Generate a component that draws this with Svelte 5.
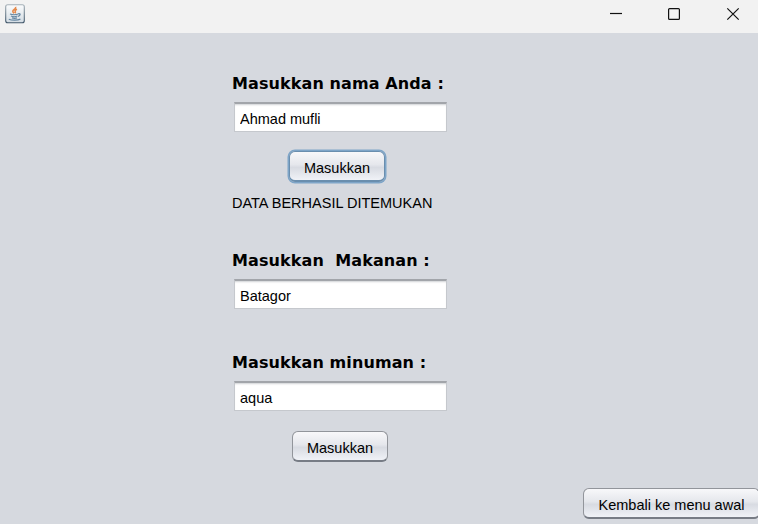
<script>
  let name = $state('Ahmad mufli');
  let food = $state('Batagor');
  let drink = $state('aqua');
</script>

<div class="window">
  <header>
    <svg class="java" width="20" height="20" viewBox="0 0 20 20">
      <defs>
        <linearGradient id="tile" x1="0" y1="0" x2="0" y2="1">
          <stop offset="0" stop-color="#fbfcfd" />
          <stop offset="1" stop-color="#d3dce3" />
        </linearGradient>
        <linearGradient id="edge" x1="0" y1="0" x2="0" y2="1">
          <stop offset="0" stop-color="#a6b1b8" />
          <stop offset="1" stop-color="#41576a" />
        </linearGradient>
      </defs>
      <rect x=".7" y=".7" width="18.6" height="18" rx="2" fill="url(#tile)" stroke="url(#edge)" stroke-width="1.1" />
      <path d="M10.6 2.800c.9 2-2.800 2.700-2.800 4.500 0 .8.700 1.300 1.300 2M12 5.300c-1.500.6-2.300 1.300-1.700 2.300.3.600.1 1.100-.4 1.500" fill="none" stroke="#e5894a" stroke-width="1.600" />
      <path d="M5 10c2 .8 6 .8 8.300 0M6 12c1.700.8 4.700.8 6.400 0M7 13.900c1.500.5 3.700.5 5 0M13.300 9.700c2.600-.3 2.300 1.900-.3 2.600M3.800 15.200c3 1.300 9 1.200 11.600-.1" fill="none" stroke="#6485a0" stroke-width="1.200" />
    </svg>
    <svg class="controls" width="130" height="16" viewBox="0 0 130 16" fill="none" stroke="#111" stroke-width="1.200">
      <path d="M0 7.500h12" />
      <rect x="58.600" y="2.600" width="10.800" height="10.800" rx="1" />
      <path d="M117.300 2.300l11.400 11.400M128.700 2.300l-11.400 11.400" />
    </svg>
  </header>

  <main>
    <section class="person">
      <label for="name">Masukkan nama Anda :</label>
      <input id="name" bind:value={name} spellcheck="false" />
      <button class="focused">Masukkan</button>
      <p>DATA BERHASIL DITEMUKAN</p>
    </section>
    <section class="food">
      <label for="food">Masukkan&nbsp; Makanan :</label>
      <input id="food" bind:value={food} spellcheck="false" />
    </section>
    <section class="drink">
      <label for="drink">Masukkan minuman :</label>
      <input id="drink" bind:value={drink} spellcheck="false" />
      <button>Masukkan</button>
    </section>
  </main>

  <footer><button class="back">Kembali ke menu awal</button></footer>
</div>

<style>
  :global(body) { margin: 0; overflow: hidden; }
  .window {
    box-sizing: border-box;
    width: 758px;
    height: 524px;
    display: flex;
    flex-direction: column;
    overflow: hidden;
    background: #d6d9df;
    color: #000;
    font: 14.5px/20px "Liberation Sans", Arial, sans-serif;
  }
  header {
    box-sizing: border-box;
    height: 33px;
    flex: none;
    display: flex;
    justify-content: space-between;
    align-items: flex-start;
    padding: 4px 18px 0 5px;
    background: #f2f2f2;
  }
  .controls { margin-top: 2px; }
  main {
    flex: 1;
    display: flex;
    flex-direction: column;
    padding: 41px 0 0 232px;
  }
  section {
    width: 216px;
    flex: none;
    display: flex;
    flex-direction: column;
    align-items: flex-start;
  }
  .person { height: 177px; }
  .food { height: 102px; }
  label {
    height: 20px;
    white-space: nowrap;
    font: bold 16px/20px "DejaVu Sans", Verdana, sans-serif;
    letter-spacing: 0.1px;
  }
  input {
    box-sizing: border-box;
    width: 213px;
    height: 30px;
    margin: 8px 0 0 2px;
    padding: 4px 5px 1px;
    border: 1px solid #c5c8cd;
    border-top: 2px solid #a2a5aa;
    border-radius: 0;
    outline: none;
    background: #fff;
    box-shadow: inset 0 2px 2px -1px #d0d2d5;
    color: #000;
    font: inherit;
  }
  button {
    box-sizing: border-box;
    width: 96px;
    height: 31px;
    padding: 3px 0 0;
    border: 1px solid #92959b;
    border-bottom: 2px solid #777c85;
    border-radius: 6px;
    background: linear-gradient(#f8f8fa, #e5e7ec 45%, #d8dbe2 55%, #f0f2f7);
    color: #000;
    font: inherit;
    white-space: nowrap;
  }
  .person button { margin: 19px 0 0 57px; }
  .drink button { margin: 20px 0 0 60px; }
  .focused {
    border-color: #6a8eae;
    box-shadow: 0 0 0 1.500px #7ea5c8;
  }
  p { margin: 11px 0 0; white-space: nowrap; }
  footer {
    flex: none;
    display: flex;
    justify-content: flex-end;
    height: 36px;
  }
  .back { flex: none; width: 177px; margin-right: -2px; }
</style>
